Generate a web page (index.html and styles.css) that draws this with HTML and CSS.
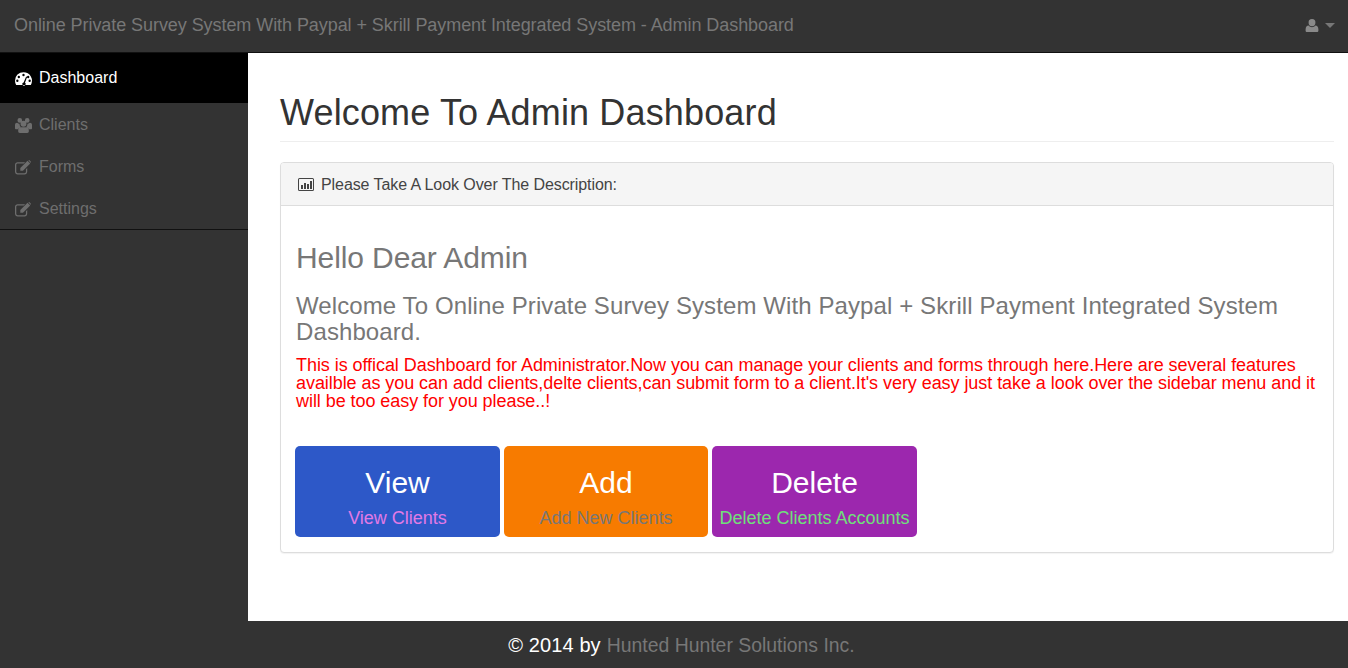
FILE: index.html
```html
<!DOCTYPE html>
<html lang="en">
<head>
<meta charset="utf-8">
<title>Admin Dashboard</title>
<link rel="stylesheet" href="styles.css">
</head>
<body>
<header class="topbar">
  <a class="brand">Online Private Survey System With Paypal + Skrill Payment Integrated System - Admin Dashboard</a>
  <div class="usermenu">
    <svg class="ico-user" viewBox="0 0 14 15"><path d="M7 1a3.4 3.4 0 0 1 3.4 3.6A3.4 3.4 0 0 1 7 8.2a3.4 3.4 0 0 1-3.4-3.6A3.4 3.4 0 0 1 7 1zM3.6 7.6C4.5 8.6 5.7 9.2 7 9.2s2.500-.6 3.400-1.600c1.800.2 3 1.400 3 4v1.200c0 .8-.6 1.200-1.300 1.200H1.900C1.200 14 .6 13.600.6 12.800v-1.200c0-2.600 1.200-3.800 3-4z"/></svg>
    <span class="caret"></span>
  </div>
</header>
<div class="main">
  <nav class="sidebar">
    <ul class="menu">
      <li class="item active">
        <svg class="ico" viewBox="0 0 16 14"><path fill-rule="evenodd" d="M8 1a8 8 0 0 0-8 8c0 1.500.4 2.900 1.100 4h13.800A8 8 0 0 0 8 1zM8 2.600a1.100 1.100 0 1 1 0 2.200 1.100 1.100 0 0 1 0-2.200zM3.600 4.500a1.100 1.100 0 1 1 0 2.200 1.100 1.100 0 0 1 0-2.200zM2.200 8a1.100 1.100 0 1 1 0 2.200 1.100 1.100 0 0 1 0-2.200zM12.400 4.500a1.100 1.100 0 1 1 0 2.200 1.100 1.100 0 0 1 0-2.200zM13.800 8a1.100 1.100 0 1 1 0 2.200 1.100 1.100 0 0 1 0-2.200zM10.500 5.200l.9.400-2 5.400a1.500 1.500 0 1 1-1.300-.3z"/></svg>
        <span>Dashboard</span>
      </li>
      <li class="item">
        <svg class="ico" viewBox="0 0 16 14"><path d="M4.500 0a2.200 2.200 0 1 1 0 4.400 2.200 2.200 0 0 1 0-4.400zM11.500 0a2.200 2.200 0 1 1 0 4.400 2.200 2.200 0 0 1 0-4.400zM8 2.500a2.800 2.800 0 1 1 0 5.600 2.800 2.800 0 0 1 0-5.600zM2 4.500c.8.600 1.500.8 2.300.8-.1 1.100.3 2.200 1.100 3C3.900 8.700 3 9.500 2.800 10.500H1c-.6 0-1-.4-1-1V6.500c0-1.100.8-2 2-2zM14 4.500c1.200 0 2 .9 2 2v3c0 .6-.4 1-1 1h-1.800c-.2-1-1.100-1.800-2.600-2.200.8-.8 1.200-1.900 1.100-3 .8 0 1.500-.2 2.300-.8zM5.400 8.700h5.200c1.400 0 2.400 1 2.400 2.500v1.300c0 .9-.6 1.500-1.500 1.500h-7c-.9 0-1.500-.6-1.500-1.500v-1.300c0-1.500 1-2.500 2.400-2.500z"/></svg>
        <span>Clients</span>
      </li>
      <li class="item">
        <svg class="ico" viewBox="0 0 16 14"><path d="M2.500 2H9.500L8.300 3.200H2.500C1.800 3.200 1.200 3.800 1.200 4.500v6.500c0 .7.600 1.300 1.300 1.300H9c.7 0 1.300-.6 1.300-1.300V8.700l1.200-1.200V11c0 1.400-1.100 2.500-2.500 2.500H2.500C1.100 13.500 0 12.400 0 11V4.500C0 3.100 1.100 2 2.500 2zM5 7.500 11.800.7l2.500 2.500L7.500 10H5zM12.500 0l.9-.0 1.800 1.800-.8.800z"/></svg>
        <span>Forms</span>
      </li>
      <li class="item">
        <svg class="ico" viewBox="0 0 16 14"><path d="M2.500 2H9.500L8.300 3.200H2.500C1.800 3.200 1.200 3.800 1.200 4.500v6.500c0 .7.600 1.300 1.300 1.300H9c.7 0 1.300-.6 1.300-1.300V8.700l1.200-1.200V11c0 1.400-1.100 2.500-2.500 2.500H2.500C1.100 13.500 0 12.400 0 11V4.500C0 3.100 1.100 2 2.500 2zM5 7.500 11.800.7l2.500 2.500L7.500 10H5zM12.500 0l.9-.0 1.800 1.800-.8.800z"/></svg>
        <span>Settings</span>
      </li>
    </ul>
  </nav>
  <main class="content">
    <h1 class="page-title">Welcome To Admin Dashboard</h1>
    <section class="panel">
      <div class="panel-head">
        <svg class="ico-chart" viewBox="0 0 16 13"><path fill-rule="evenodd" d="M1.500 0h13A1.500 1.500 0 0 1 16 1.500v10a1.500 1.500 0 0 1-1.500 1.500h-13A1.500 1.500 0 0 1 0 11.500v-10A1.500 1.500 0 0 1 1.500 0zM1.500 1a.5.5 0 0 0-.5.5v10a.5.5 0 0 0 .5.5h13a.5.5 0 0 0 .5-.5v-10a.5.5 0 0 0-.5-.5zM3 7h2v4H3zM6 5h2v6H6zM9 6h2v5H9zM12 3h2v8h-2z"/></svg>
        <span class="panel-title">Please Take A Look Over The Description:</span>
      </div>
      <div class="panel-body">
        <h3 class="hello">Hello Dear Admin</h3>
        <h4 class="welcome">Welcome To Online Private Survey System With Paypal + Skrill Payment Integrated System Dashboard.</h4>
        <p class="notice">This is offical Dashboard for Administrator.Now you can manage your clients and forms through here.Here are several features availble as you can add clients,delte clients,can submit form to a client.It's very easy just take a look over the sidebar menu and it will be too easy for you please..!</p>
        <div class="tiles">
          <a class="tile tile-view"><span class="tile-title">View</span><span class="tile-sub">View Clients</span></a>
          <a class="tile tile-add"><span class="tile-title">Add</span><span class="tile-sub">Add New Clients</span></a>
          <a class="tile tile-delete"><span class="tile-title">Delete</span><span class="tile-sub">Delete Clients Accounts</span></a>
        </div>
      </div>
    </section>
  </main>
</div>
<footer class="footer"><span class="footer-copy">© 2014 by</span> <a class="footer-link">Hunted Hunter Solutions Inc.</a></footer>
</body>
</html>
```
FILE: styles.css
```css
* { box-sizing: border-box; }
html, body { margin: 0; height: 100%; }
body {
  display: flex;
  flex-direction: column;
  height: 668px;
  overflow: hidden;
  font-family: "Liberation Sans", Arial, sans-serif;
  background: #fff;
  color: #333;
}
.topbar {
  height: 53px;
  flex: none;
  background: #333;
  border-bottom: 1px solid #111;
  display: flex;
  align-items: center;
  justify-content: space-between;
  padding: 0 13px 1px 14px;
}
.brand { font-size: 18px; letter-spacing: -.065px; color: #777; }
.usermenu { display: flex; align-items: center; gap: 6px; }
.ico-user { width: 14px; height: 15px; fill: #8a8a8a; }
.caret {
  width: 0; height: 0;
  border-left: 5px solid transparent;
  border-right: 5px solid transparent;
  border-top: 5px solid #777;
}
.main { flex: 1; display: flex; min-height: 0; }
.sidebar { width: 248px; flex: none; background: #333; }
.menu {
  list-style: none;
  margin: 0; padding: 0;
  border-bottom: 1px solid #111;
}
.item {
  height: 42px;
  display: flex;
  align-items: center;
  gap: 7px;
  padding: 2px 0 0 15px;
  font-size: 16px;
  color: #6e6e6e;
}
.item.active { height: 50px; background: #000; color: #fff; padding: 0 0 0 15px; }
.ico { width: 17px; height: 15px; fill: currentColor; flex: none; }
.content { flex: 1; min-width: 0; padding: 0 14px 0 32px; }
.page-title {
  margin: 40px 0 20px;
  padding-bottom: 9px;
  height: 49px;
  border-bottom: 1px solid #eee;
  font-size: 36px;
  letter-spacing: .15px;
  line-height: 39px;
  font-weight: 400;
  color: #333;
}
.panel {
  border: 1px solid #ddd;
  border-radius: 4px;
  box-shadow: 0 1px 1px rgba(0,0,0,.05);
  background: #fff;
}
.panel-head {
  height: 43px;
  background: #f5f5f5;
  border-bottom: 1px solid #ddd;
  border-radius: 3px 3px 0 0;
  display: flex;
  align-items: center;
  gap: 7px;
  padding-left: 17px;
  font-size: 16px;
  letter-spacing: -.08px;
  color: #444;
}
.panel-title { position: relative; top: 1px; }
.ico-chart { width: 16px; height: 13px; fill: #444; flex: none; }
.panel-body { padding: 15px; height: 346px; }
.hello {
  margin: 20px 0 19px;
  font-size: 30px;
  letter-spacing: -.1px;
  line-height: 33px;
  font-weight: 400;
  color: #777;
}
.welcome {
  margin: 0 0 11px;
  font-size: 24px;
  letter-spacing: .1px;
  line-height: 26px;
  font-weight: 400;
  color: #777;
}
.notice {
  margin: 0 -2px 36px 0;
  font-size: 18px;
  letter-spacing: -.06px;
  line-height: 18px;
  color: #f00;
}
.tiles { display: flex; gap: 4px; margin-left: -1px; }
.tile {
  height: 91px;
  border-radius: 5px;
  border: 1px solid transparent;
  display: flex;
  flex-direction: column;
  align-items: center;
  padding-top: 19px;
}
.tile-title { font-size: 30px; line-height: 33px; color: #fff; }
.tile-sub { font-size: 18px; line-height: 20px; margin-top: 9px; }
.tile-view { width: 205px; background: #2d58c8; }
.tile-view .tile-sub { color: #e27ae6; }
.tile-add { width: 204px; background: #f77b00; }
.tile-add .tile-sub { color: #777; }
.tile-delete { width: 205px; background: #9c27ae; }
.tile-delete .tile-sub { color: #6fe07a; }
.footer {
  height: 47px;
  flex: none;
  background: #333;
  color: #fff;
  font-size: 19.4px;
  display: flex;
  align-items: center;
  justify-content: center;
  gap: 6px;
  padding: 2px 0 0 15px;
}
.footer-copy { font-size: 20px; letter-spacing: .1px; }
.footer-link { color: #777; }
```
